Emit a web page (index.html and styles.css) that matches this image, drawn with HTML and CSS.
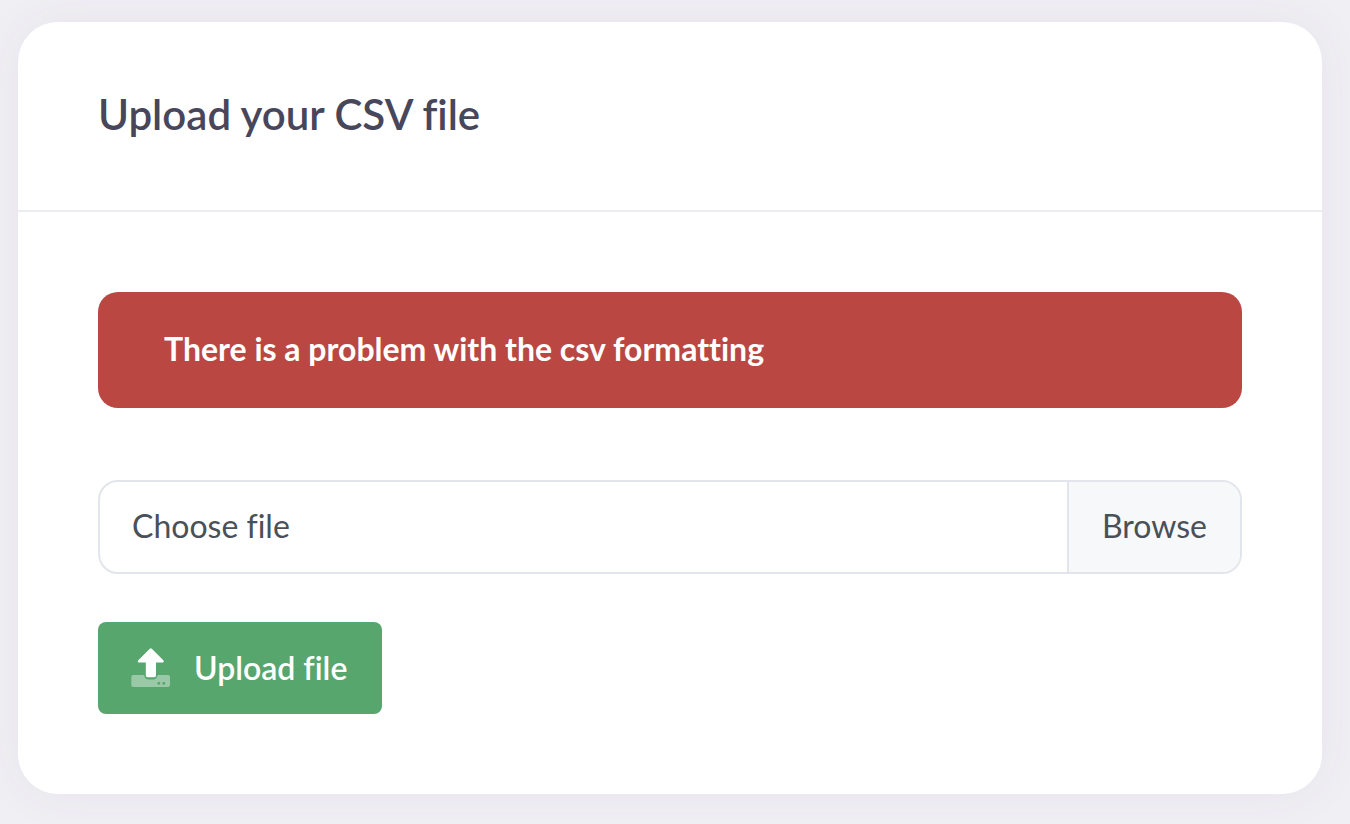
FILE: index.html
```html
<!DOCTYPE html>
<html lang="en">
  <head>
    <meta charset="utf-8" />
    <meta name="viewport" content="width=device-width, initial-scale=1" />
    <title>Upload your CSV file</title>
    <link rel="stylesheet" href="styles.css">
  </head>
  <body>
    <main class="card">
      <div class="card-header">
        <h1 class="card-title">Upload your CSV file</h1>
      </div>
      <form class="card-body">
        <div class="alert" role="alert">There is a problem with the csv formatting</div>
        <div class="custom-file">
          <input type="file" class="custom-file-input" id="csv-file" accept=".csv" />
          <label class="custom-file-label" for="csv-file">
            <span class="file-name">Choose file</span>
            <span class="file-browse">Browse</span>
          </label>
        </div>
        <button type="submit" class="btn-upload">
          <svg class="btn-icon" width="40" height="40" viewBox="0 0 40 40" aria-hidden="true">
            <path fill="#fff" fill-opacity="0.4" fill-rule="evenodd" d="M3.3 27H13.3C14.3 27 14.4 28 14.8 29C15.4 30.8 16.6 31.4 18.3 31.4H23.3C25 31.4 26.2 30.8 26.8 29C27.2 28 27.3 27 28.3 27H38Q40 27 40 29V37Q40 39 38 39H3.3Q1.3 39 1.3 37V29Q1.3 27 3.3 27ZM28.8 33.7a1.5 1.5 0 1 0 0 3a1.5 1.5 0 1 0 0-3ZM33.8 33.7a1.5 1.5 0 1 0 0 3a1.5 1.5 0 1 0 0-3Z" />
            <path fill="#fff" d="M19.8 0.7Q20.8 0 21.8 0.7L33.3 12.3Q34.6 14 33 14.6H26V27.5Q26 29.2 24.3 29.2H17.5Q15.8 29.2 15.8 27.5V14.6H8.6Q7 14 8.3 12.3Z" />
          </svg>
          Upload file
        </button>
      </form>
    </main>
  </body>
</html>
```
FILE: styles.css
```css
* {
  box-sizing: border-box;
}

body {
  margin: 0;
  padding: 22px 28px 30px 18px;
  background-color: #f0eff4;
  font-family: Lato, "Liberation Sans", sans-serif;
  font-size: 32px;
  font-variant-ligatures: none;
  line-height: 48px;
  color: #495057;
}

.card {
  background-color: #fff;
  border-radius: 40px;
  box-shadow: 0 0 50px rgba(82, 63, 105, 0.06);
}

.card-header {
  padding: 68px 80px 72px;
  border-bottom: 2px solid #ebedf3;
}

.card-title {
  margin: 0;
  font-size: 42px;
  font-weight: 600;
  line-height: 48px;
  color: #48465b;
}

.card-body {
  padding: 80px;
}

.alert {
  padding: 33px 66px 35px;
  border-radius: 20px;
  background-color: #bb4742;
  color: #fff;
  font-weight: 700;
}

.custom-file {
  position: relative;
  margin: 72px 0 48px;
}

/* the real input lies over the styled label */
.custom-file-input {
  position: absolute;
  inset: 0;
  width: 100%;
  height: 100%;
  margin: 0;
  opacity: 0;
  cursor: pointer;
}

.custom-file-label {
  display: flex;
  overflow: hidden;
  border: 2px solid #e2e5ec;
  border-radius: 20px;
  background-color: #fff;
}

.file-name {
  flex: 1;
  padding: 20px 32px 22px;
}

.file-browse {
  padding: 20px 33px 22px;
  border-left: 2px solid #e2e5ec;
  background-color: #f7f8fa;
}

.btn-upload {
  display: inline-flex;
  align-items: center;
  gap: 24px;
  padding: 22px 35px 22px 32px;
  border: none;
  border-radius: 8px;
  background-color: #57a66e;
  color: #fff;
  font-family: inherit;
  font-size: 32px;
  font-variant-ligatures: none;
  font-weight: 600;
  line-height: 48px;
  vertical-align: top;
  cursor: pointer;
}
```
